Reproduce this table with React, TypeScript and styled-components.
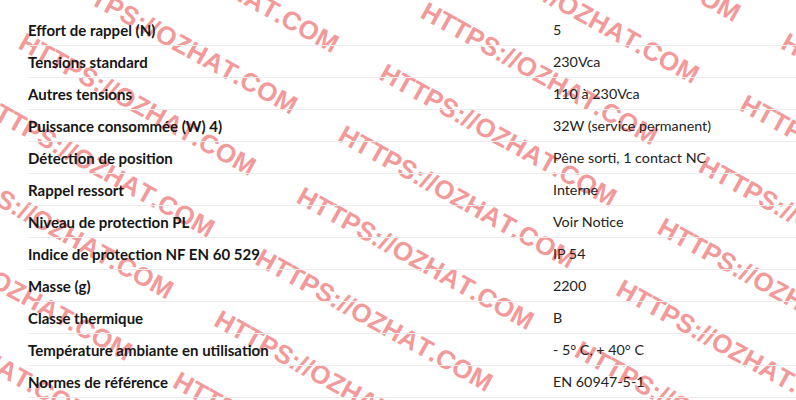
import styled, { createGlobalStyle } from 'styled-components';

const GlobalStyle = createGlobalStyle`
  html, body {
    margin: 0;
    padding: 0;
    background: #fff;
  }
  body {
    font-family: Lato, 'Liberation Sans', Arial, sans-serif;
    color: #1b1b1b;
    overflow: hidden;
  }
`;

const Page = styled.div`
  position: relative;
  width: 796px;
  height: 400px;
  overflow: hidden;
  padding: 14px 0 0 28px;
  box-sizing: border-box;
`;

const SpecTable = styled.div`
  position: relative;
  z-index: 1;
  display: grid;
  grid-template-columns: 525px 1fr;
`;

const SpecRow = styled.div`
  display: contents;
`;

const Cell = styled.div<{ $label?: boolean }>`
  height: 32px;
  display: flex;
  align-items: center;
  border-bottom: 1px solid #ececec;
  box-sizing: border-box;
  font-size: ${(p) => (p.$label ? '15px' : '14.3px')};
  font-weight: ${(p) => (p.$label ? 700 : 400)};
  color: ${(p) => (p.$label ? '#161616' : '#222')};
  white-space: nowrap;
`;

const Watermarks = styled.svg`
  position: absolute;
  left: 0;
  top: 0;
  width: 796px;
  height: 400px;
  z-index: 0;
  pointer-events: none;
`;

const Mark = styled.text`
  font-family: 'Liberation Sans', Arial, sans-serif;
  font-weight: 700;
  font-size: 26px;
  fill: #f29a9a;
`;

const specs: [string, string][] = [
  ['Effort de rappel (N)', '5'],
  ['Tensions standard', '230Vca'],
  ['Autres tensions', '110 à 230Vca'],
  ['Puissance consommée (W) 4)', '32W (service permanent)'],
  ['Détection de position', 'Pêne sorti, 1 contact NC'],
  ['Rappel ressort', 'Interne'],
  ['Niveau de protection PL', 'Voir Notice'],
  ['Indice de protection NF EN 60 529', 'IP 54'],
  ['Masse (g)', '2200'],
  ['Classe thermique', 'B'],
  ['Température ambiante en utilisation', '- 5° C, + 40° C'],
  ['Normes de référence', 'EN 60947-5-1'],
];

const MARK_TEXT = 'HTTPS://OZHAT.COM';
const MARK_SIZE = 26;
const ANGLE = (29 * Math.PI) / 180;
// Arial Bold advance widths (em)
const advance: Record<string, number> = {
  H: 0.722, T: 0.611, P: 0.667, S: 0.667, ':': 0.333, '/': 0.278,
  O: 0.778, Z: 0.611, A: 0.722, '.': 0.278, C: 0.722, M: 0.833,
};

// every glyph sits on the slanted baseline, rotated with it
const glyphPositions = (bx: number, by: number) => {
  const xs: string[] = [];
  const ys: string[] = [];
  let run = 0;
  for (const ch of MARK_TEXT) {
    xs.push((bx + run * Math.cos(ANGLE)).toFixed(1));
    ys.push((by + run * Math.sin(ANGLE)).toFixed(1));
    run += advance[ch] * MARK_SIZE;
  }
  return { x: xs.join(' '), y: ys.join(' ') };
};

// watermark lattice: rows ~74px apart, one mark every ~318px along the line
const origin = { x: 419, y: 17 };
const stepRow = { x: -41.3, y: 61.6 };
const stepAlong = { x: 278, y: 154 };

const marks: { id: string; x: string; y: string }[] = [];
for (let i = -10; i <= 14; i++) {
  for (let j = -5; j <= 5; j++) {
    const bx = origin.x + i * stepRow.x + j * stepAlong.x;
    const by = origin.y + i * stepRow.y + j * stepAlong.y;
    if (bx > -320 && bx < 830 && by > -200 && by < 440) {
      marks.push({ id: `wm-${i}-${j}`, ...glyphPositions(bx, by) });
    }
  }
}

const App = () => (
  <Page>
    <GlobalStyle />
    <Watermarks viewBox='0 0 796 400'>
      {marks.map(({ id, x, y }) => (
        <Mark key={id} x={x} y={y} rotate='29'>
          {MARK_TEXT}
        </Mark>
      ))}
    </Watermarks>
    <SpecTable>
      {specs.map(([label, value]) => (
        <SpecRow key={label}>
          <Cell $label>{label}</Cell>
          <Cell>{value}</Cell>
        </SpecRow>
      ))}
    </SpecTable>
  </Page>
);

export default App;
